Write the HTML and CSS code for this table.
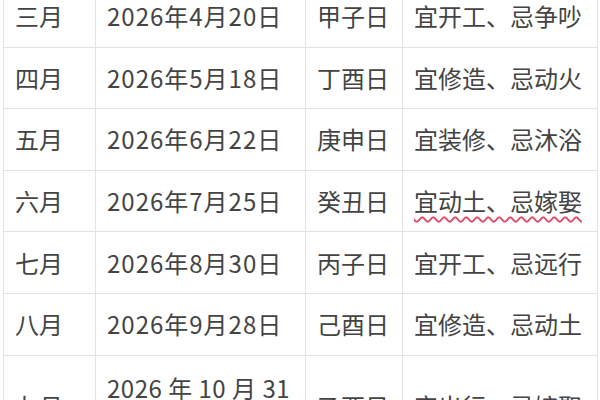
FILE: index.html
```html
<!DOCTYPE html>
<html lang="zh-CN">
<head>
<meta charset="utf-8">
<link rel="stylesheet" href="styles.css">
</head>
<body>
<div class="wrap">
<table class="cal">
<colgroup><col class="c1"><col class="c2"><col class="c3"><col class="c4"></colgroup>
<tbody>
<tr><td>三月</td><td class="date">2026年4月20日</td><td>甲子日</td><td>宜开工、忌争吵</td></tr>
<tr><td>四月</td><td class="date">2026年5月18日</td><td>丁酉日</td><td>宜修造、忌动火</td></tr>
<tr><td>五月</td><td class="date">2026年6月22日</td><td>庚申日</td><td>宜装修、忌沐浴</td></tr>
<tr><td>六月</td><td class="date">2026年7月25日</td><td>癸丑日</td><td><span class="spell">宜动土、忌嫁娶</span></td></tr>
<tr><td>七月</td><td class="date">2026年8月30日</td><td>丙子日</td><td>宜开工、忌远行</td></tr>
<tr><td>八月</td><td class="date">2026年9月28日</td><td>己酉日</td><td>宜修造、忌动土</td></tr>
<tr class="tall"><td>九月</td><td class="date wide">2026 年 10 月 31 日</td><td>乙酉日</td><td>宜出行、忌嫁娶</td></tr>
</tbody>
</table>
</div>
</body>
</html>
```
FILE: styles.css
```css
html, body {
  margin: 0;
  padding: 0;
  background: #ffffff;
  overflow: hidden;
}
.wrap {
  width: 600px;
  height: 400px;
  overflow: hidden;
}
.cal {
  margin: -15px 0 0 3px;
  border-collapse: collapse;
  table-layout: fixed;
  width: 594px;
  font-family: "Noto Sans CJK SC", "Noto Sans", sans-serif;
  font-size: 24px;
  color: #444444;
}
.c1 { width: 92px; }
.c2 { width: 210px; }
.c3 { width: 97px; }
.c4 { width: 195px; }
.cal td {
  border: 1px solid #e2e2e2;
  height: 61.6px;
  padding: 0 11px;
  line-height: 36px;
  vertical-align: middle;
  text-align: left;
  box-sizing: border-box;
}
.cal td.date {
  letter-spacing: 1px;
}
.cal td.date.wide {
  letter-spacing: 0.5px;
}
.cal tr.tall td {
  padding-top: 14px;
  padding-bottom: 14px;
}
.spell {
  text-decoration: underline wavy #e24a66;
  text-decoration-thickness: 1.6px;
  text-underline-offset: 5px;
}
```
